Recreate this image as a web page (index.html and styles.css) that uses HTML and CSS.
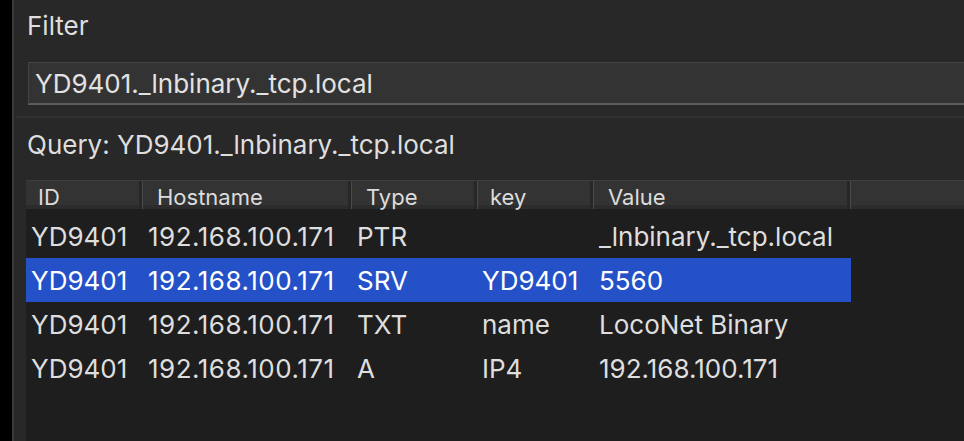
FILE: index.html
```html
<!DOCTYPE html>
<html>
<head>
<meta charset="utf-8">
<link rel="stylesheet" href="styles.css">
</head>
<body>
<div class="window">
  <div class="strip"></div>
  <div class="panel">
    <div class="label filter-label">Filter</div>
    <div class="input">YD9401._lnbinary._tcp.local</div>
    <div class="separator"></div>
    <div class="label query-label">Query: YD9401._lnbinary._tcp.local</div>
    <div class="table">
      <div class="thead">
        <div class="th">ID</div>
        <div class="th">Hostname</div>
        <div class="th">Type</div>
        <div class="th">key</div>
        <div class="th">Value</div>
        <div class="th th-rest"></div>
      </div>
      <div class="tbody">
        <div class="row">
          <div class="td">YD9401</div>
          <div class="td">192.168.100.171</div>
          <div class="td">PTR</div>
          <div class="td"></div>
          <div class="td">_lnbinary._tcp.local</div>
        </div>
        <div class="row selected">
          <div class="td">YD9401</div>
          <div class="td">192.168.100.171</div>
          <div class="td">SRV</div>
          <div class="td">YD9401</div>
          <div class="td">5560</div>
        </div>
        <div class="row">
          <div class="td">YD9401</div>
          <div class="td">192.168.100.171</div>
          <div class="td">TXT</div>
          <div class="td">name</div>
          <div class="td">LocoNet Binary</div>
        </div>
        <div class="row">
          <div class="td">YD9401</div>
          <div class="td">192.168.100.171</div>
          <div class="td">A</div>
          <div class="td">IP4</div>
          <div class="td">192.168.100.171</div>
        </div>
      </div>
    </div>
  </div>
</div>
</body>
</html>
```

FILE: styles.css
```css
html, body {
  margin: 0;
  padding: 0;
  background: #000;
}

body {
  font-family: "Inter", "Liberation Sans", sans-serif;
  color: #dedede;
  width: 964px;
  height: 441px;
  overflow: hidden;
}

.window {
  display: flex;
  height: 441px;
}

.strip {
  width: 12px;
  background: #000;
  border-right: 2px solid #3a3a3a;
  flex: none;
}

.panel {
  flex: 1;
  background: #282828;
  display: flex;
  flex-direction: column;
  min-width: 0;
}

.label {
  padding-left: 13px;
  font-size: 26px;
  white-space: nowrap;
}

.filter-label {
  height: 52px;
  line-height: 52px;
}

.input {
  margin-top: 10px;
  margin-left: 14px;
  height: 40px;
  line-height: 41px;
  background: #333333;
  border-top: 1px solid #434343;
  border-left: 1px solid #434343;
  border-bottom: 2px solid #5c5c5c;
  padding-left: 6px;
  font-size: 26px;
  color: #e2e2e2;
  white-space: nowrap;
}

.separator {
  margin-top: 11px;
  margin-left: 2px;
  height: 2px;
  background: #303030;
}

.query-label {
  height: 62px;
  line-height: 54px;
}

.table {
  margin-left: 12px;
  flex: 1;
  background: #1e1e1e;
  display: flex;
  flex-direction: column;
}

.thead {
  display: grid;
  grid-template-columns: 117px 209px 126px 116px 257px 1fr;
  height: 29px;
  background: #333333;
  border-top: 1px solid #3e3e3e;
  box-shadow: inset 0 -4px 0 #2c2c2c;
  box-sizing: border-box;
}

.th {
  box-sizing: border-box;
  height: 28px;
  font-size: 22px;
  line-height: 23px;
  padding-top: 5px;
  padding-left: 12px;
  border-right: 1px solid #4a4a4a;
  box-shadow: inset -3px 0 0 #272727;
  color: #dcdcdc;
  white-space: nowrap;
}

.th:nth-child(2),
.th:nth-child(3),
.th:nth-child(5) {
  padding-left: 14px;
}

.th-rest {
  border-right: none;
  box-shadow: none;
}

.tbody {
  padding-top: 5px;
}

.row {
  display: grid;
  grid-template-columns: 117px 209px 126px 116px 257px;
  width: 825px;
  height: 44px;
}

.row.selected {
  background: #2451c8;
  color: #ffffff;
}

.td {
  font-size: 26px;
  line-height: 46px;
  padding-left: 5px;
  white-space: nowrap;
}

.td:nth-child(2) {
  letter-spacing: 0.5px;
}

.td:nth-child(4) {
  padding-left: 4px;
}
```
